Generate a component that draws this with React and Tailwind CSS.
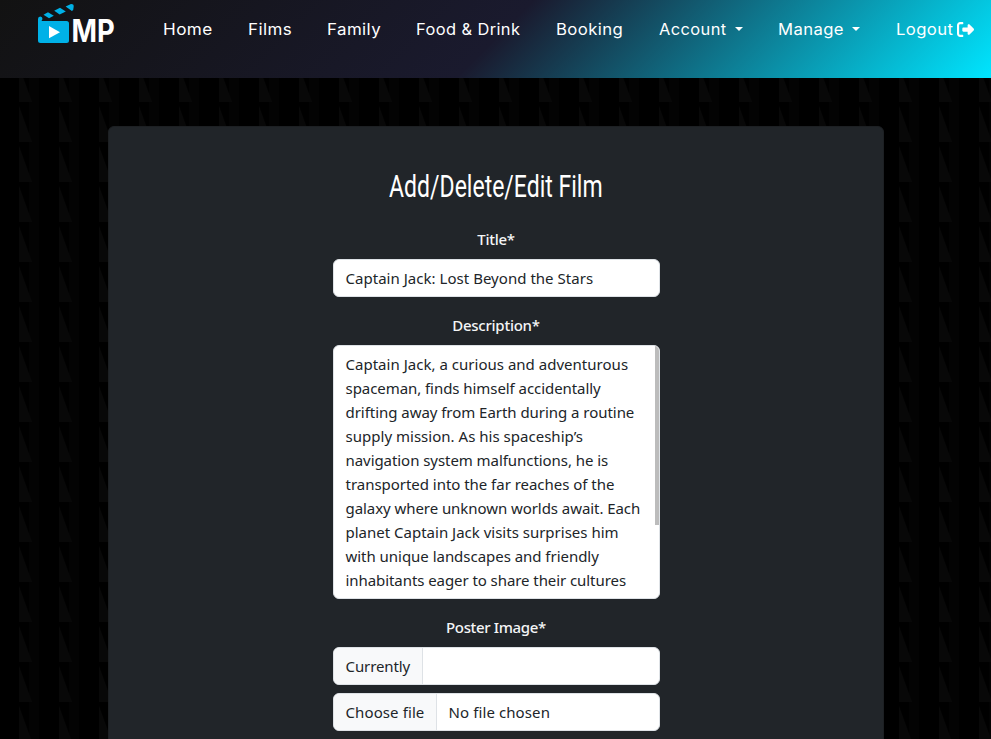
const NAV = [
  { label: 'Home', box: 'w-[85px]', stretch: 'scale-x-[1.07]' },
  { label: 'Films', box: 'w-[79px]', stretch: 'scale-x-[1.06]' },
  { label: 'Family', box: 'w-[89px]', stretch: 'scale-x-[1.055]' },
  { label: 'Food & Drink', box: 'w-[140px]', stretch: 'scale-x-[1.025]' },
  { label: 'Booking', box: 'w-[103px]', stretch: 'scale-x-[1.045]' },
  { label: 'Account', box: 'w-[119px]', stretch: 'scale-x-[1.025]', caret: 'w-[76px]' },
  { label: 'Manage', box: 'w-[118px]', stretch: 'scale-x-[1.04]', caret: 'w-[74px]' },
];

const DESCRIPTION = [
  ['Captain Jack, a curious and adventurous', 'tracking-[0.02px]'],
  ['spaceman, finds himself accidentally', 'tracking-[-0.06px]'],
  ['drifting away from Earth during a routine', 'tracking-[-0.04px]'],
  ['supply mission. As his spaceship’s', 'tracking-[0.02px]'],
  ['navigation system malfunctions, he is', 'tracking-[-0.06px]'],
  ['transported into the far reaches of the', 'tracking-[-0.03px]'],
  ['galaxy where unknown worlds await. Each', 'tracking-[-0.06px]'],
  ['planet Captain Jack visits surprises him', 'tracking-[0px]'],
  ['with unique landscapes and friendly', 'tracking-[-0.03px]'],
  ['inhabitants eager to share their cultures', 'tracking-[-0.07px]'],
];

function Logo() {
  return (
    <svg className="block overflow-visible" width="80" height="46" viewBox="0 0 80 46">
      <g fill="#00b1e7">
        <path d="M1 18 Q1 15.500 3.200 15.500 Q5.600 15.700 5.500 18 L4.500 20 H29.500 Q32 20 32 22.500 V39.500 Q32 42 29.500 42 H3.500 Q1 42 1 39.500Z" />
        <path d="M6.500 13.800 L11 11.200 L16.800 14.700 L12 17.300Z" />
        <path d="M17.200 9.700 L23 6.700 L28.800 10.500 L22.700 13.600Z" />
        <path d="M28.600 5.500 L34 3.100 Q36.800 3 36.700 5.500 L36.200 8.900 L34.900 10Z" />
      </g>
      <path d="M12 25 V37.300 L23 31.200Z" fill="#fff" />
      <text x="34.500" y="40.900" fill="#fff" fontFamily="Inter, sans-serif" fontWeight="700" fontSize="31.500" textLength="43.200" lengthAdjust="spacingAndGlyphs">MP</text>
    </svg>
  );
}

function Pattern() {
  return (
    <svg className="absolute inset-0 h-full w-full" aria-hidden="true">
      <defs>
        <pattern id="spikes" x="19" y="26" width="40" height="40" patternUnits="userSpaceOnUse">
          <rect x="10" width="10" height="40" fill="#030303" />
          <path d="M0 2 L13 38 H0Z" fill="#080808" />
        </pattern>
      </defs>
      <rect width="100%" height="100%" fill="url(#spikes)" />
    </svg>
  );
}

function Label({ children, className }) {
  return <div className={`h-6 text-center text-[15px] font-medium leading-6 text-[#f4f5f6] ${className}`}>{children}</div>;
}

export default function App() {
  return (
    <div className="flex h-[739px] w-[991px] flex-col overflow-hidden bg-black font-['Noto_Sans',sans-serif]">
      <header className="flex h-[78px] shrink-0 items-start bg-[linear-gradient(135deg,#121212_0%,#1a1a2e_50%,#00e5ff_100%)] pl-[37px] font-['Inter',sans-serif] text-base text-white">
        <div className="w-[126px] pt-[1px]"><Logo /></div>
        <nav className="flex pt-[17px] leading-6 tracking-[0.4px]">
          {NAV.map((n) => (
            <div key={n.label} className={`flex shrink-0 items-center whitespace-nowrap ${n.box}`}>
              <span className={`inline-block origin-left ${n.caret || ''} ${n.stretch}`}>{n.label}</span>
              {n.caret && (
                <span className="h-0 w-0 border-x-[4px] border-t-[4px] border-x-transparent border-t-white" />
              )}
            </div>
          ))}
          <div className="flex items-center">
            <span className="inline-block w-[61px] origin-left scale-x-[1.04]">Logout</span>
            <svg width="17" height="17" viewBox="0 0 512 512" fill="#fff">
              <path d="M377.900 105.900 500.700 228.700c7.200 7.200 11.300 17.100 11.300 27.300s-4.100 20.100-11.300 27.300L377.900 406.100c-6.400 6.400-15 9.900-24 9.900-18.700 0-33.900-15.200-33.900-33.900V320H192c-17.700 0-32-14.300-32-32v-64c0-17.700 14.300-32 32-32h128v-62.100c0-18.700 15.200-33.900 33.900-33.900 9 0 17.600 3.600 24 9.900zM160 96H96c-17.700 0-32 14.300-32 32v256c0 17.700 14.300 32 32 32h64c17.700 0 32 14.300 32 32s-14.300 32-32 32H96c-53 0-96-43-96-96V128c0-53 43-96 96-96h64c17.700 0 32 14.300 32 32s-14.300 32-32 32z" />
            </svg>
          </div>
        </nav>
      </header>
      <main className="relative flex flex-1 justify-center overflow-hidden pt-12">
        <Pattern />
        <section className="relative h-[700px] w-[776px] rounded-md border border-[#1d2023] bg-[#212529]">
          <div className="ml-[224px] w-[327px] pt-[40px]">
            <h1 className="flex h-10 items-center justify-center whitespace-nowrap font-[Roboto,sans-serif] text-[31px] leading-10 text-white">
              <span className="inline-block scale-x-[0.742]">Add/Delete/Edit Film</span>
            </h1>
            <Label className="mt-[20px] tracking-[-0.3px]">Title*</Label>
            <div className="mt-2 h-[38px] rounded-md border border-[#dee2e6] bg-white pl-[12px] text-[15px] leading-[36px] tracking-[0.03px] text-[#212529]">
              Captain Jack: Lost Beyond the Stars
            </div>
            <Label className="mt-4 tracking-[-0.25px]">Description*</Label>
            <div className="mt-2 flex h-[254px] justify-between overflow-hidden rounded-md border border-[#dee2e6] bg-white pl-[12px] text-[15px] leading-6 text-[#212529]">
              <div className="pt-[6px]">
                {DESCRIPTION.map(([text, track]) => (
                  <div key={text} className={`whitespace-nowrap ${track}`}>{text}</div>
                ))}
              </div>
              <div className="h-[179px] w-1 shrink-0 bg-[#bcbcbc]" />
            </div>
            <Label className="mt-4 tracking-[-0.35px]">Poster Image*</Label>
            <div className="mt-2 flex h-[38px] overflow-hidden rounded-md border border-[#dee2e6] bg-white text-[15px] leading-[37px] text-[#212529]">
              <div className="w-[89px] border-r border-[#dee2e6] bg-[#f8f9fa] pl-[12px] tracking-[-0.1px]">Currently</div>
            </div>
            <div className="mt-2 flex h-[38px] overflow-hidden rounded-md border border-[#dee2e6] bg-white text-[15px] leading-[37px] tracking-[0.1px] text-[#212529]">
              <div className="w-[103px] border-r border-[#dee2e6] bg-[#f8f9fa] pl-[12px]">Choose file</div>
              <div className="pl-[12px]">No file chosen</div>
            </div>
          </div>
        </section>
      </main>
    </div>
  );
}
